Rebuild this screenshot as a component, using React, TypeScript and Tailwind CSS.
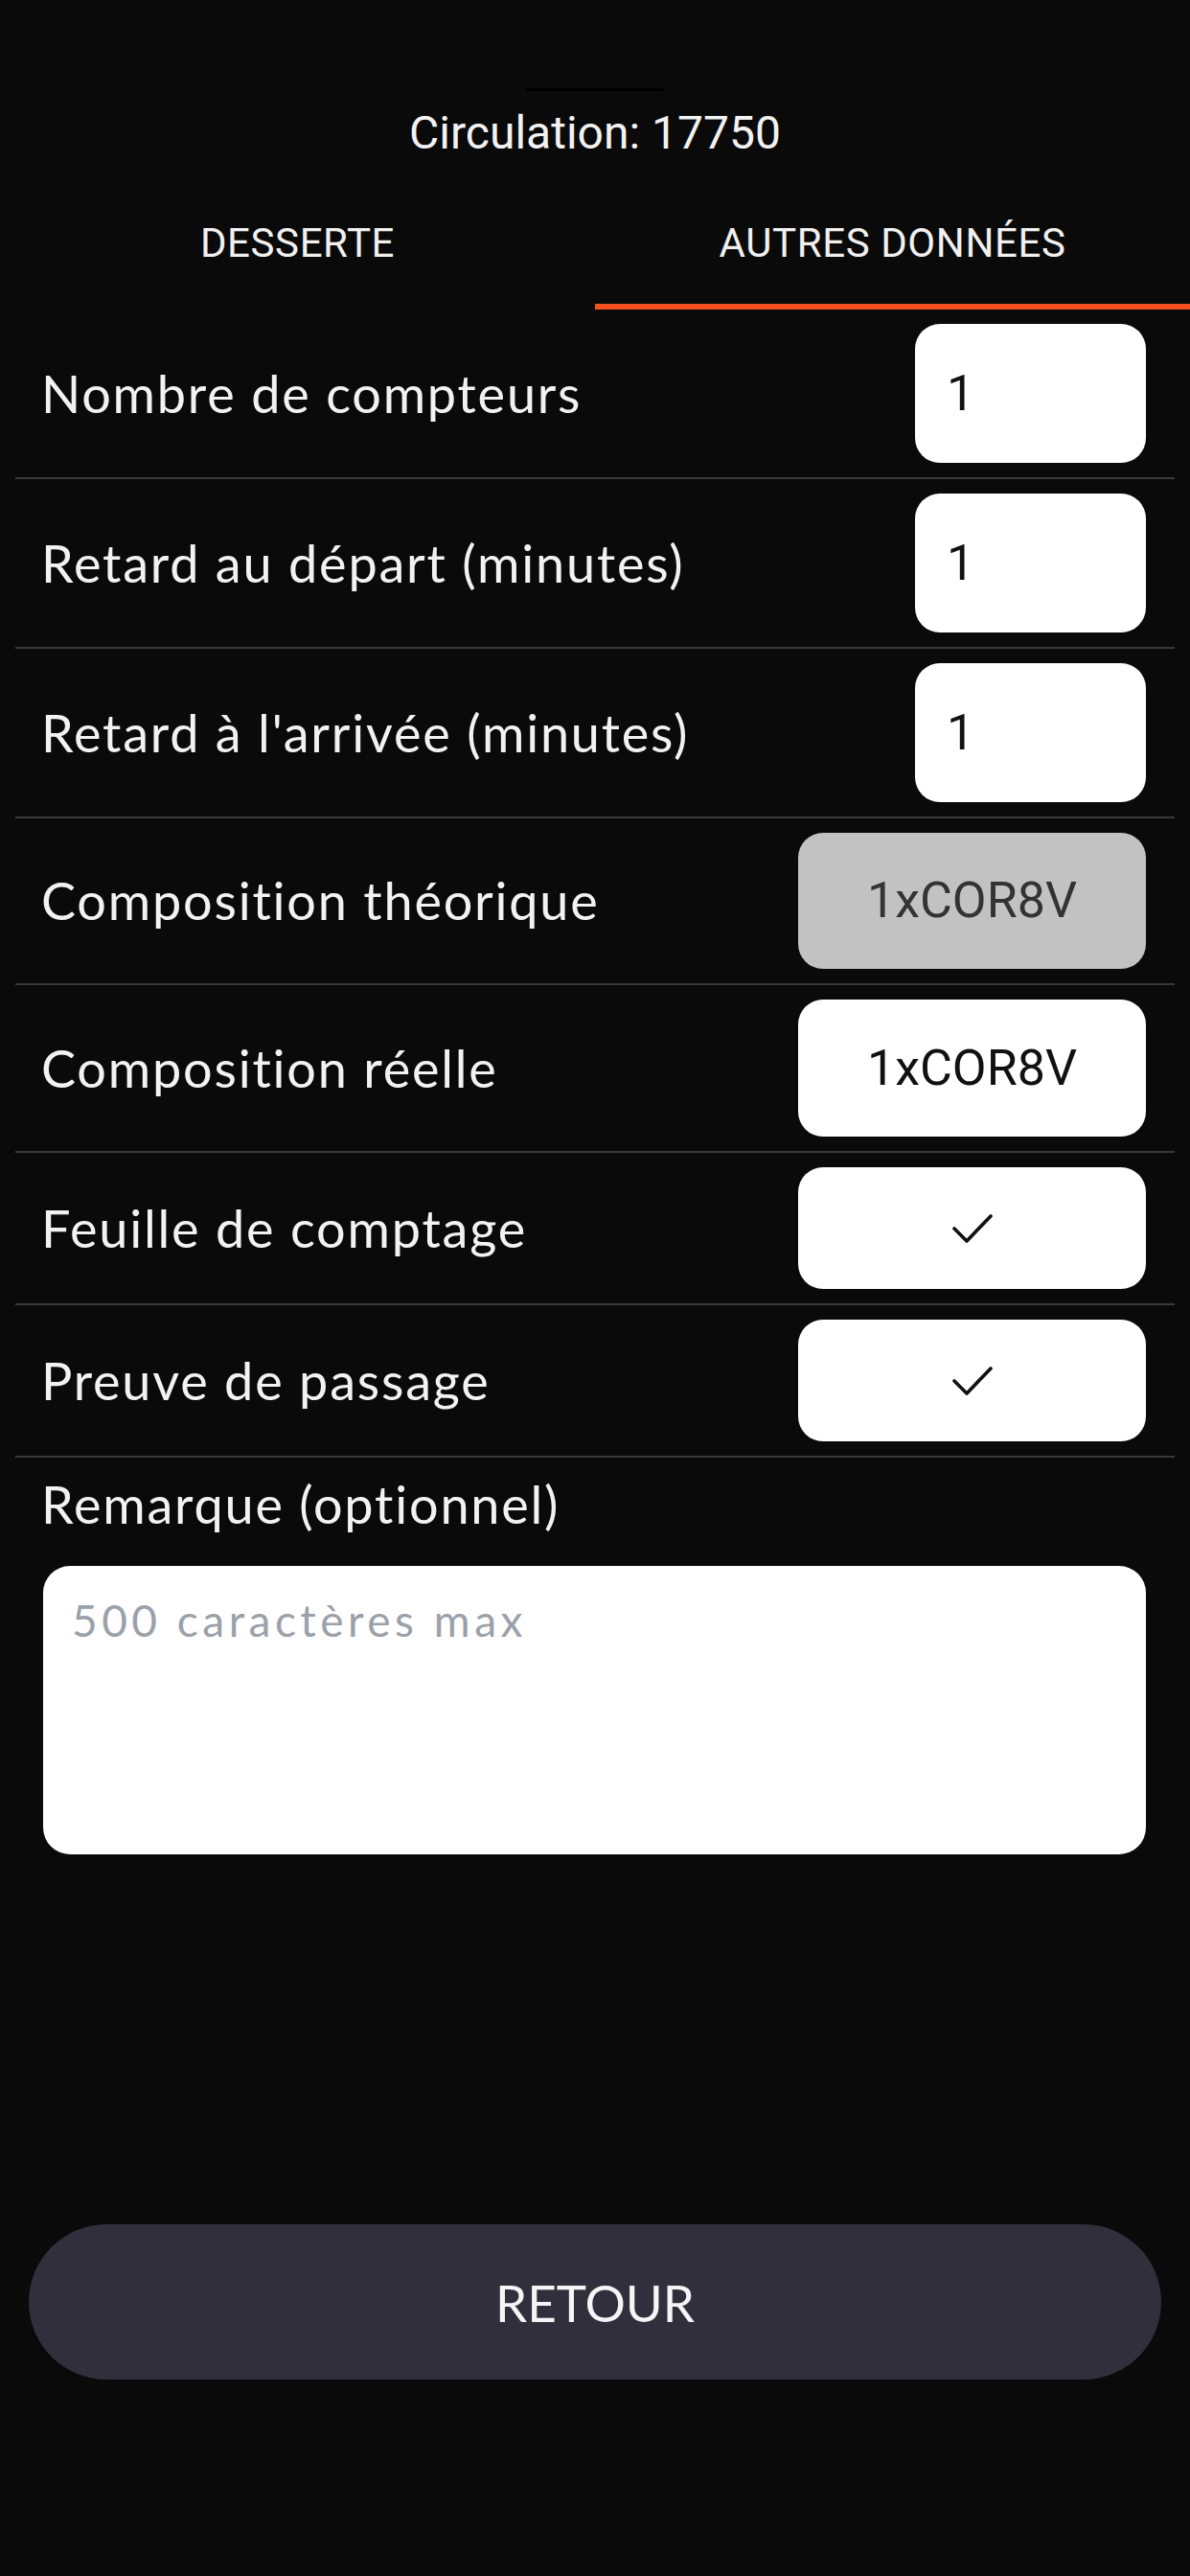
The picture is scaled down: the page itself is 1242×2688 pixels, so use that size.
import { useState } from "react"

const label = "font-['Lato','Noto_Sans',sans-serif] text-[54px] leading-none tracking-[1.8px] text-[#f2f2f2]"
const value = "font-['Roboto','Noto_Sans',sans-serif] text-[52px] leading-none"

type Row = {
  title: string
  kind: "num" | "text" | "check"
  val?: string
  disabled?: boolean
  h: string
}

const rows: Row[] = [
  { title: "Nombre de compteurs", kind: "num", val: "1", h: "h-[145px]" },
  { title: "Retard au départ (minutes)", kind: "num", val: "1", h: "h-[145px]" },
  { title: "Retard à l'arrivée (minutes)", kind: "num", val: "1", h: "h-[145px]" },
  { title: "Composition théorique", kind: "text", val: "1xCOR8V", disabled: true, h: "h-[142px]" },
  { title: "Composition réelle", kind: "text", val: "1xCOR8V", h: "h-[143px]" },
  { title: "Feuille de comptage", kind: "check", h: "h-[127px]" },
  { title: "Preuve de passage", kind: "check", h: "h-[127px]" },
]

function Check() {
  return (
    <svg width="44" height="34" viewBox="0 0 44 34" fill="none">
      <polyline points="3,17 16,30 41,4" stroke="#111" strokeWidth="3.6" strokeLinecap="round" strokeLinejoin="round" />
    </svg>
  )
}

function Field({ row }: { row: Row }) {
  if (row.kind === "num") {
    return (
      <div className={`w-[241px] ${row.h} rounded-[26px] bg-white flex items-center pl-[33px] text-[#111] ${value}`}>
        {row.val}
      </div>
    )
  }
  return (
    <div
      className={`w-[363px] ${row.h} rounded-[26px] flex items-center justify-center ${value} ${
        row.disabled ? "bg-[#c2c2c2] text-[#333333]" : "bg-white text-[#111]"
      }`}
    >
      {row.kind === "check" ? <Check /> : row.val}
    </div>
  )
}

export default function App() {
  const [tab, setTab] = useState(1)
  const tabs = ["DESSERTE", "AUTRES DONNÉES"]

  return (
    <div className="min-h-[2688px] w-full bg-[#0a0a0a] flex flex-col">
      <div className="mt-[92px] mx-auto w-[144px] h-[3px] rounded-full bg-black" />
      <div className="mt-[16px] text-center font-['Roboto','Noto_Sans',sans-serif] text-[48px] leading-[56px] text-[#f2f2f2]">
        Circulation: 17750
      </div>

      <div className="flex h-[156px]">
        {tabs.map((t, i) => (
          <button key={t} onClick={() => setTab(i)} className="flex-1 flex flex-col">
            <span className="pt-[62px] font-['Roboto','Noto_Sans',sans-serif] text-[42px] leading-[49px] tracking-[0.6px] text-[#f0f0f0]">
              {t}
            </span>
            <span className="flex-1" />
            <span className={`h-[6px] w-full ${tab === i ? "bg-[#f4511e]" : "bg-transparent"}`} />
          </button>
        ))}
      </div>

      <div className="mx-[16px] flex flex-col">
        {rows.map((row) => (
          <div key={row.title} className="flex items-center justify-between py-[15px] pl-[27px] pr-[30px] border-b-2 border-[#3a3a3a]">
            <span className={label}>{row.title}</span>
            <Field row={row} />
          </div>
        ))}
      </div>

      <div className={`mt-[22px] pl-[43px] ${label}`}>Remarque (optionnel)</div>
      <textarea
        placeholder="500 caractères max"
        className="mt-[37px] ml-[45px] w-[1151px] h-[301px] resize-none rounded-[28px] bg-white pt-[34px] pl-[30px] pr-[30px] outline-none font-['Lato','Noto_Sans',sans-serif] text-[46px] leading-none tracking-[4.5px] text-[#111] placeholder:text-[#9aa1a9]"
      />

      <button className="mt-[386px] mx-[30px] h-[162px] rounded-full bg-[#302f3b] font-['Lato','Noto_Sans',sans-serif] text-[53px] leading-none text-[#f5f5f5]">
        RETOUR
      </button>
    </div>
  )
}
